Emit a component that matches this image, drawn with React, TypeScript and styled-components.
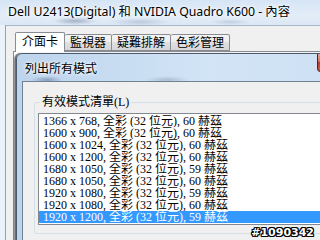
import React from "react";
import styled, { createGlobalStyle } from "styled-components";

const Global = createGlobalStyle`
  html, body { margin: 0; padding: 0; background: #e9f0f8; }
  #root { width: 320px; height: 240px; }
`;

const Screen = styled.div`
  position: relative;
  width: 320px;
  height: 240px;
  overflow: hidden;
  display: flex;
  flex-direction: column;
  background: #eaf1f9;
`;

const TitleBar = styled.div`
  flex: none;
  height: 25px;
  box-sizing: border-box;
  padding: 3px 0 0 8px;
  font-family: "Noto Sans", "Noto Sans CJK TC", sans-serif;
  font-size: 12.3px;
  line-height: 17px;
  color: #000;
  white-space: nowrap;
  text-shadow: 0 0 5px #fff, 0 0 3px #fff;
  background:
    radial-gradient(ellipse 22px 4px at 75px 21px, rgba(90, 110, 140, 0.45), transparent),
    radial-gradient(ellipse 30px 4px at 140px 22px, rgba(110, 130, 160, 0.3), transparent),
    radial-gradient(ellipse 20px 3px at 230px 22px, rgba(110, 130, 160, 0.25), transparent),
    linear-gradient(#d6e5f5, #e3edf8 60%, #dbe7f4);
`;

const WindowBody = styled.div`
  flex: 1;
  display: flex;
  flex-direction: column;
  margin-left: 5px;
  border-left: 1px solid #93a3b5;
  border-top: 1px solid #a9b8c8;
  background: #f0f0f0;
  padding: 6px 0 0 7px;
  min-height: 0;
`;

const TabStrip = styled.div`
  flex: none;
  display: flex;
  align-items: flex-end;
  height: 19px;
  padding-left: 2px;
  position: relative;
  z-index: 1;
`;

const Tab = styled.div<{ $active?: boolean }>`
  box-sizing: border-box;
  height: ${(p) => (p.$active ? "20px" : "17px")};
  margin-bottom: ${(p) => (p.$active ? "-1px" : "0")};
  padding: ${(p) => (p.$active ? "0 6px 2px" : "0 5px")};
  border: 1px solid #898c95;
  border-bottom: ${(p) => (p.$active ? "none" : "1px solid #898c95")};
  border-left: ${(p) => (p.$active ? "1px solid #898c95" : "none")};
  border-radius: 2px 2px 0 0;
  display: flex;
  align-items: center;
  font-family: "Liberation Serif", "Noto Sans CJK TC", serif;
  font-size: 12px;
  line-height: 12px;
  color: #000;
  background: ${(p) =>
    p.$active
      ? "#ffffff"
      : "linear-gradient(#f4f4f4, #ededed 50%, #e0e0e0 50%, #d6d6d6)"};
`;

const TabPanel = styled.div`
  flex: 1;
  border-top: 1px solid #898c95;
  border-left: 1px solid #898c95;
  background: #ffffff;
  padding: 1px 0 0 2px;
  min-height: 0;
`;

const Dialog = styled.div`
  width: 350px;
  height: 200px;
  box-sizing: border-box;
  display: flex;
  flex-direction: column;
  padding: 0 5px;
  border: 1px solid #4b5a6c;
  border-radius: 6px 6px 0 0;
  box-shadow: -1px 0 0 #6d6d6d, -2px 0 1px rgba(0, 0, 0, 0.45);
  background:
    radial-gradient(ellipse 16px 4px at 30px 26px, rgba(70, 90, 125, 0.45), transparent),
    radial-gradient(ellipse 22px 4px at 150px 26px, rgba(90, 110, 140, 0.3), transparent),
    linear-gradient(to right, #bdd4ed, #d2e4f6 55%, #cde0f3);
`;

const DialogTitle = styled.div`
  flex: none;
  height: 27px;
  display: flex;
  align-items: flex-start;
  padding-left: 3px;
`;

const DialogCaption = styled.span`
  margin-top: 7px;
  font-family: "Noto Sans CJK TC", sans-serif;
  font-size: 12px;
  line-height: 14px;
  color: #000;
  text-shadow: 0 0 5px #fff, 0 0 3px #fff;
`;

const CloseButton = styled.div`
  margin-left: auto;
  width: 43px;
  height: 18px;
  box-sizing: border-box;
  border: 1px solid #5c1f17;
  border-top: none;
  border-radius: 0 0 4px 4px;
  background: linear-gradient(#e8a493, #d2705f 45%, #c0392b 50%, #d0604c);
`;

const DialogClient = styled.div`
  flex: 1;
  border: 1px solid #6f8193;
  border-bottom: none;
  background: #f0f0f0;
  padding: 14px 0 0 11px;
`;

const GroupBox = styled.fieldset`
  margin: 0;
  width: 330px;
  min-width: 0;
  box-sizing: border-box;
  border: 1px solid #d5dfe5;
  border-radius: 3px;
  padding: 0 0 8px 3px;
`;

const GroupLegend = styled.legend`
  margin-left: 2px;
  padding: 0 2px;
  font-family: "Liberation Serif", "Noto Sans CJK TC", serif;
  font-size: 12px;
  line-height: 12px;
  color: #000;
`;

const ListBox = styled.div`
  margin-top: 5px;
  width: 300px;
  border: 1px solid #828790;
  background: #ffffff;
  padding: 1px 0;
`;

const Row = styled.div<{ $selected?: boolean }>`
  height: 12px;
  line-height: 12px;
  padding-left: 4px;
  white-space: nowrap;
  overflow: hidden;
  font-family: "Liberation Serif", "Noto Sans CJK TC", serif;
  font-size: 12px;
  color: ${(p) => (p.$selected ? "#ffffff" : "#000000")};
  background: ${(p) => (p.$selected ? "#3399ff" : "transparent")};
`;

const Watermark = styled.div`
  position: absolute;
  right: 6px;
  bottom: 1px;
  font-family: "DejaVu Sans", sans-serif;
  font-weight: bold;
  font-size: 11px;
  line-height: 12px;
  color: #ffffff;
  text-shadow:
    1px 0 0 #000, -1px 0 0 #000, 0 1px 0 #000, 0 -1px 0 #000,
    1px 1px 0 #000, -1px -1px 0 #000, 1px -1px 0 #000, -1px 1px 0 #000;
`;

const modes = [
  "1366 x 768, 全彩 (32 位元), 60 赫茲",
  "1600 x 900, 全彩 (32 位元), 60 赫茲",
  "1600 x 1024, 全彩 (32 位元), 60 赫茲",
  "1600 x 1200, 全彩 (32 位元), 60 赫茲",
  "1680 x 1050, 全彩 (32 位元), 59 赫茲",
  "1680 x 1050, 全彩 (32 位元), 60 赫茲",
  "1920 x 1080, 全彩 (32 位元), 59 赫茲",
  "1920 x 1080, 全彩 (32 位元), 60 赫茲",
  "1920 x 1200, 全彩 (32 位元), 59 赫茲",
];

const tabs = ["介面卡", "監視器", "疑難排解", "色彩管理"];

export default function App() {
  return (
    <>
      <Global />
      <Screen>
        <TitleBar>Dell U2413(Digital) 和 NVIDIA Quadro K600 - 內容</TitleBar>
        <WindowBody>
          <TabStrip>
            {tabs.map((t, i) => (
              <Tab key={t} $active={i === 0}>
                {t}
              </Tab>
            ))}
          </TabStrip>
          <TabPanel>
            <Dialog>
              <DialogTitle>
                <DialogCaption>列出所有模式</DialogCaption>
                <CloseButton />
              </DialogTitle>
              <DialogClient>
                <GroupBox>
                  <GroupLegend>有效模式清單(L)</GroupLegend>
                  <ListBox>
                    {modes.map((m, i) => (
                      <Row key={i} $selected={i === modes.length - 1}>
                        {m}
                      </Row>
                    ))}
                  </ListBox>
                </GroupBox>
              </DialogClient>
            </Dialog>
          </TabPanel>
        </WindowBody>
        <Watermark>#1090342</Watermark>
      </Screen>
    </>
  );
}
